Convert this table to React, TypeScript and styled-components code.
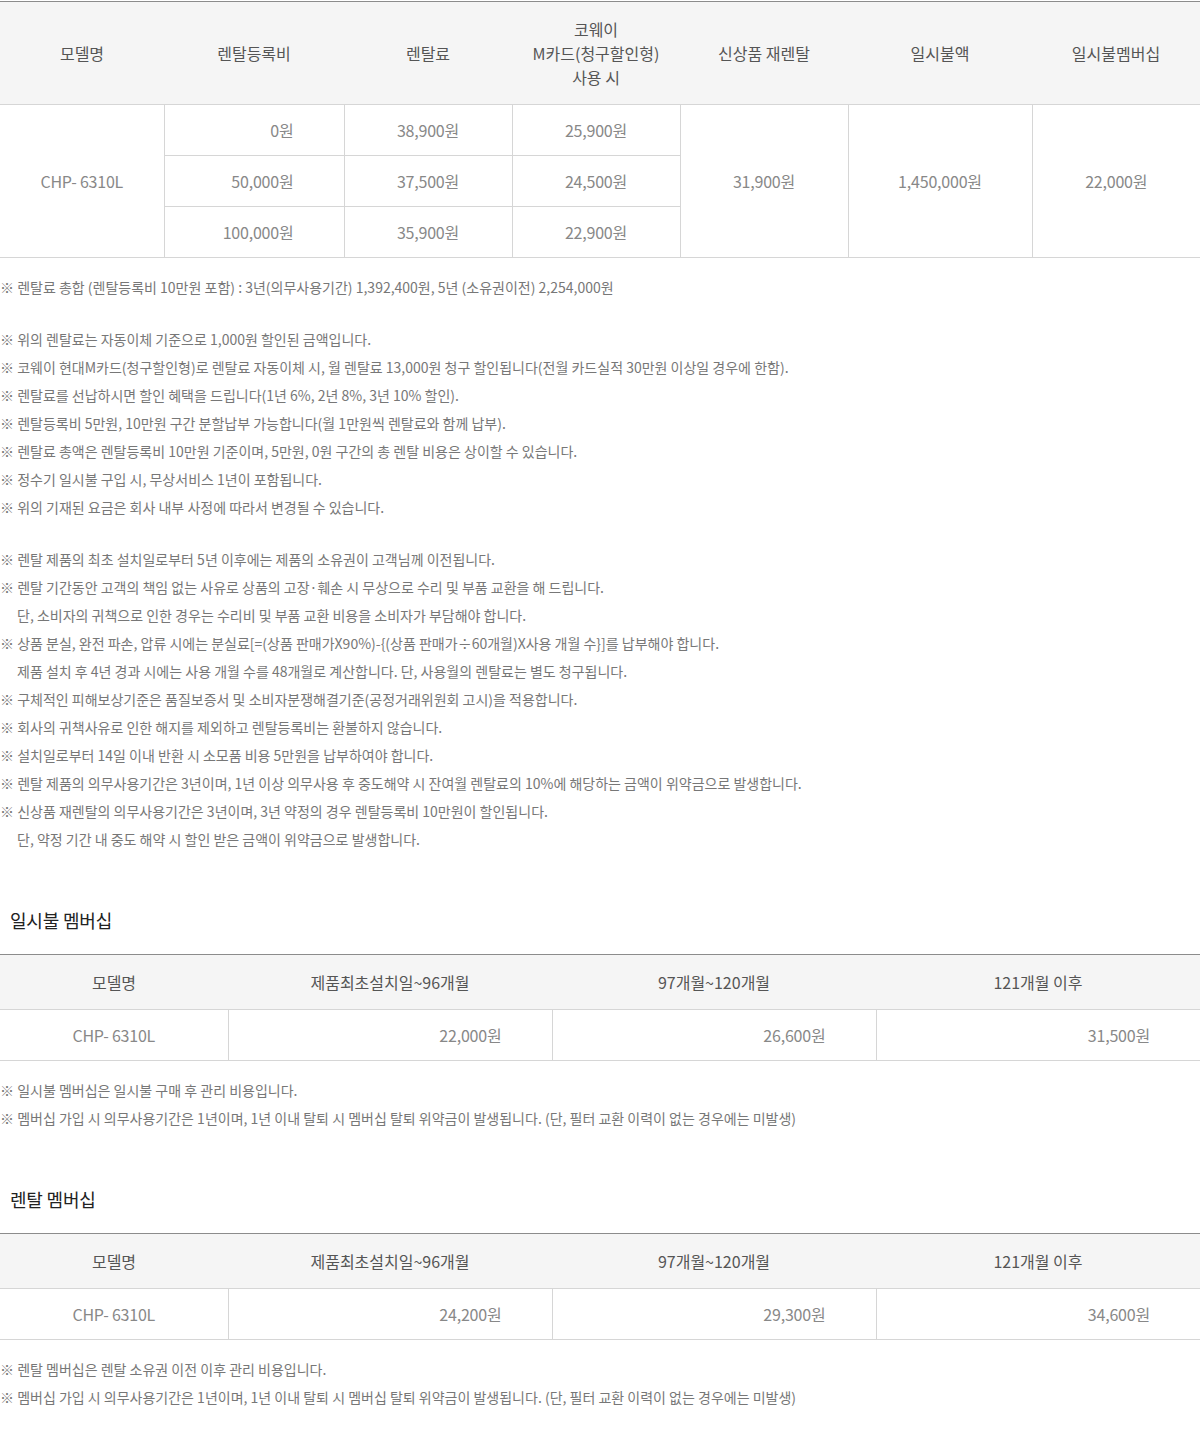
import React from "react";
import styled, { createGlobalStyle } from "styled-components";

const Global = createGlobalStyle`
  html, body { margin: 0; padding: 0; background: #fff; }
  body { font-family: "Noto Sans CJK KR", "Noto Sans", sans-serif; }
`;

const Page = styled.div`
  width: 1200px;
  padding-top: 1px;
`;

const Table = styled.table`
  width: 1200px;
  border-collapse: collapse;
  table-layout: fixed;
  border-top: 1px solid #8c8c8c;
  font-size: 16px;
`;

const Th = styled.th<{ $h: number }>`
  height: ${(p) => p.$h}px;
  padding: 0;
  background: #f5f5f5;
  color: #555;
  font-weight: 400;
  line-height: 24px;
  text-align: center;
  border-bottom: 1px solid #d6d6d6;
`;

const Td = styled.td<{ $right?: boolean; $h?: number }>`
  height: ${(p) => p.$h ?? 50}px;
  padding: 0 ${(p) => (p.$right ? "50px" : "0")} 0 0;
  color: #888;
  letter-spacing: -0.2px;
  text-align: ${(p) => (p.$right ? "right" : "center")};
  border: 1px solid #d6d6d6;
  border-top: none;
  &:first-child { border-left: none; }
  &:last-child { border-right: none; }
`;

const Notes = styled.div<{ $mt?: number }>`
  margin-top: ${(p) => p.$mt ?? 15}px;
  display: flex;
  flex-direction: column;
  gap: 24px;
`;

const NoteGroup = styled.ul`
  list-style: none;
  margin: 0;
  padding: 0;
`;

const Note = styled.li<{ $indent?: boolean }>`
  font-size: 14px;
  line-height: 28px;
  color: #777;
  padding-left: ${(p) => (p.$indent ? "17px" : "0")};
  white-space: nowrap;
`;

const SectionTitle = styled.h3`
  margin: 54px 0 21px;
  padding-left: 10px;
  font-size: 18px;
  line-height: 26px;
  font-weight: 400;
  color: #222;
  letter-spacing: -0.2px;
`;

const mainCols = [164, 180, 168, 168, 168, 184, 168];
const memberCols = [228, 324, 324, 324];

const rentRows = [
  ["0원", "38,900원", "25,900원"],
  ["50,000원", "37,500원", "24,500원"],
  ["100,000원", "35,900원", "22,900원"],
];

const group1 = [
  "※ 렌탈료 총합 (렌탈등록비 10만원 포함) : 3년(의무사용기간) 1,392,400원, 5년 (소유권이전) 2,254,000원",
];
const group2 = [
  "※ 위의 렌탈료는 자동이체 기준으로 1,000원 할인된 금액입니다.",
  "※ 코웨이 현대M카드(청구할인형)로 렌탈료 자동이체 시, 월 렌탈료 13,000원 청구 할인됩니다(전월 카드실적 30만원 이상일 경우에 한함).",
  "※ 렌탈료를 선납하시면 할인 혜택을 드립니다(1년 6%, 2년 8%, 3년 10% 할인).",
  "※ 렌탈등록비 5만원, 10만원 구간 분할납부 가능합니다(월 1만원씩 렌탈료와 함께 납부).",
  "※ 렌탈료 총액은 렌탈등록비 10만원 기준이며, 5만원, 0원 구간의 총 렌탈 비용은 상이할 수 있습니다.",
  "※ 정수기 일시불 구입 시, 무상서비스 1년이 포함됩니다.",
  "※ 위의 기재된 요금은 회사 내부 사정에 따라서 변경될 수 있습니다.",
];
const group3: [string, boolean][] = [
  ["※ 렌탈 제품의 최초 설치일로부터 5년 이후에는 제품의 소유권이 고객님께 이전됩니다.", false],
  ["※ 렌탈 기간동안 고객의 책임 없는 사유로 상품의 고장·훼손 시 무상으로 수리 및 부품 교환을 해 드립니다.", false],
  ["단, 소비자의 귀책으로 인한 경우는 수리비 및 부품 교환 비용을 소비자가 부담해야 합니다.", true],
  ["※ 상품 분실, 완전 파손, 압류 시에는 분실료[=(상품 판매가X90%)-{(상품 판매가÷60개월)X사용 개월 수}]를 납부해야 합니다.", false],
  ["제품 설치 후 4년 경과 시에는 사용 개월 수를 48개월로 계산합니다. 단, 사용월의 렌탈료는 별도 청구됩니다.", true],
  ["※ 구체적인 피해보상기준은 품질보증서 및 소비자분쟁해결기준(공정거래위원회 고시)을 적용합니다.", false],
  ["※ 회사의 귀책사유로 인한 해지를 제외하고 렌탈등록비는 환불하지 않습니다.", false],
  ["※ 설치일로부터 14일 이내 반환 시 소모품 비용 5만원을 납부하여야 합니다.", false],
  ["※ 렌탈 제품의 의무사용기간은 3년이며, 1년 이상 의무사용 후 중도해약 시 잔여월 렌탈료의 10%에 해당하는 금액이 위약금으로 발생합니다.", false],
  ["※ 신상품 재렌탈의 의무사용기간은 3년이며, 3년 약정의 경우 렌탈등록비 10만원이 할인됩니다.", false],
  ["단, 약정 기간 내 중도 해약 시 할인 받은 금액이 위약금으로 발생합니다.", true],
];

const memberHeaders = ["모델명", "제품최초설치일~96개월", "97개월~120개월", "121개월 이후"];

const MemberTable = ({ values }: { values: string[] }) => (
  <Table>
    <colgroup>
      {memberCols.map((w, i) => (
        <col key={i} style={{ width: w }} />
      ))}
    </colgroup>
    <thead>
      <tr>
        {memberHeaders.map((h) => (
          <Th key={h} $h={54}>
            {h}
          </Th>
        ))}
      </tr>
    </thead>
    <tbody>
      <tr>
        <Td>CHP- 6310L</Td>
        {values.map((v) => (
          <Td key={v} $right>
            {v}
          </Td>
        ))}
      </tr>
    </tbody>
  </Table>
);

const MemberNotes = ({ first }: { first: string }) => (
  <Notes>
    <NoteGroup>
      <Note>{first}</Note>
      <Note>
        ※ 멤버십 가입 시 의무사용기간은 1년이며, 1년 이내 탈퇴 시 멤버십 탈퇴 위약금이 발생됩니다. (단, 필터 교환 이력이 없는 경우에는 미발생)
      </Note>
    </NoteGroup>
  </Notes>
);

export default function App() {
  return (
    <Page>
      <Global />
      <Table>
        <colgroup>
          {mainCols.map((w, i) => (
            <col key={i} style={{ width: w }} />
          ))}
        </colgroup>
        <thead>
          <tr>
            <Th $h={102}>모델명</Th>
            <Th $h={102}>렌탈등록비</Th>
            <Th $h={102}>렌탈료</Th>
            <Th $h={102}>
              코웨이
              <br />
              M카드(청구할인형)
              <br />
              사용 시
            </Th>
            <Th $h={102}>신상품 재렌탈</Th>
            <Th $h={102}>일시불액</Th>
            <Th $h={102}>일시불멤버십</Th>
          </tr>
        </thead>
        <tbody>
          {rentRows.map((r, i) => (
            <tr key={i}>
              {i === 0 && <Td rowSpan={3}>CHP- 6310L</Td>}
              <Td $right>{r[0]}</Td>
              <Td>{r[1]}</Td>
              <Td>{r[2]}</Td>
              {i === 0 && (
                <>
                  <Td rowSpan={3}>31,900원</Td>
                  <Td rowSpan={3}>1,450,000원</Td>
                  <Td rowSpan={3}>22,000원</Td>
                </>
              )}
            </tr>
          ))}
        </tbody>
      </Table>

      <Notes>
        <NoteGroup>
          {group1.map((t) => (
            <Note key={t}>{t}</Note>
          ))}
        </NoteGroup>
        <NoteGroup>
          {group2.map((t) => (
            <Note key={t}>{t}</Note>
          ))}
        </NoteGroup>
        <NoteGroup>
          {group3.map(([t, ind]) => (
            <Note key={t} $indent={ind}>
              {t}
            </Note>
          ))}
        </NoteGroup>
      </Notes>

      <SectionTitle>일시불 멤버십</SectionTitle>
      <MemberTable values={["22,000원", "26,600원", "31,500원"]} />
      <MemberNotes first="※ 일시불 멤버십은 일시불 구매 후 관리 비용입니다." />

      <SectionTitle>렌탈 멤버십</SectionTitle>
      <MemberTable values={["24,200원", "29,300원", "34,600원"]} />
      <MemberNotes first="※ 렌탈 멤버십은 렌탈 소유권 이전 이후 관리 비용입니다." />
    </Page>
  );
}
